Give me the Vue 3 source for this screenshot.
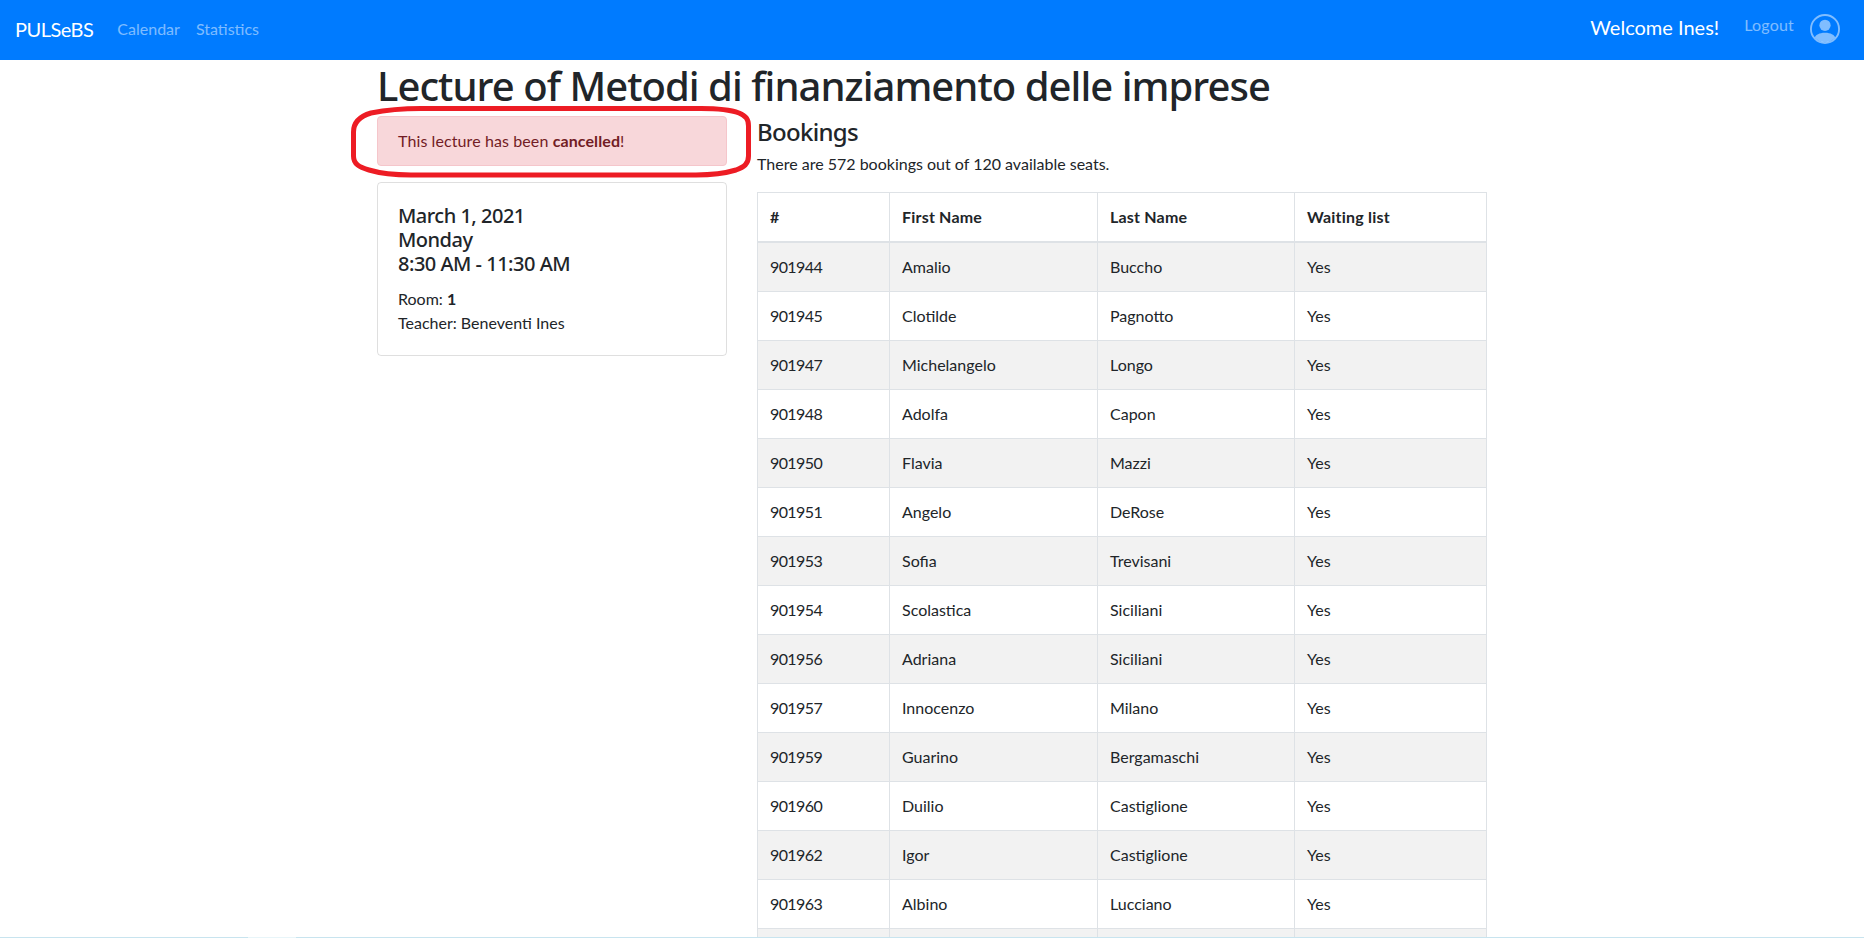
<script setup>
const students = [
  { id: 901944, first: 'Amalio', last: 'Buccho' },
  { id: 901945, first: 'Clotilde', last: 'Pagnotto' },
  { id: 901947, first: 'Michelangelo', last: 'Longo' },
  { id: 901948, first: 'Adolfa', last: 'Capon' },
  { id: 901950, first: 'Flavia', last: 'Mazzi' },
  { id: 901951, first: 'Angelo', last: 'DeRose' },
  { id: 901953, first: 'Sofia', last: 'Trevisani' },
  { id: 901954, first: 'Scolastica', last: 'Siciliani' },
  { id: 901956, first: 'Adriana', last: 'Siciliani' },
  { id: 901957, first: 'Innocenzo', last: 'Milano' },
  { id: 901959, first: 'Guarino', last: 'Bergamaschi' },
  { id: 901960, first: 'Duilio', last: 'Castiglione' },
  { id: 901962, first: 'Igor', last: 'Castiglione' },
  { id: 901963, first: 'Albino', last: 'Lucciano' }
]
</script>

<template>
  <div class="page">
    <nav class="navbar">
      <a class="brand">PULSeBS</a>
      <a class="nav-link">Calendar</a>
      <a class="nav-link">Statistics</a>
      <span class="welcome">Welcome Ines!</span>
      <a class="nav-link logout">Logout</a>
      <svg class="user" viewBox="0 0 16 16" fill="currentColor">
        <path d="M13.468 12.37C12.758 11.226 11.195 10 8 10s-4.757 1.225-5.468 2.37A6.987 6.987 0 0 0 8 15a6.987 6.987 0 0 0 5.468-2.63z"/>
        <path fill-rule="evenodd" d="M8 9a3 3 0 1 0 0-6 3 3 0 0 0 0 6z"/>
        <path fill-rule="evenodd" d="M8 1a7 7 0 1 0 0 14A7 7 0 0 0 8 1zM0 8a8 8 0 1 1 16 0A8 8 0 0 1 0 8z"/>
      </svg>
    </nav>

    <main class="container">
      <h1>Lecture of Metodi di finanziamento delle imprese</h1>
      <div class="row">
        <div class="side">
          <div class="alert">
            This lecture has been <b>cancelled</b>!
            <svg class="circled" viewBox="0 0 400 72" fill="none">
              <path d="M2.5 26 C2.5 16 10 10 20 7 C35 4 55 2.5 70 2.5 L350 2.5 C365 2.5 380 4 388 7 C395 10 397.5 13 397.5 20 L397.5 50 C397.5 58 393 61 385 64 C375 67 360 69 345 69 L60 69 C40 69 28 67 18 64 C8 61 2.5 58 2.5 50 Z" stroke="#ed1c24" stroke-width="5"/>
            </svg>
          </div>
          <div class="card">
            <h5>March 1, 2021<br>Monday<br>8:30 AM - 11:30 AM</h5>
            <p>Room: <b>1</b><br>Teacher: Beneventi Ines</p>
          </div>
        </div>
        <div class="content">
          <h4>Bookings</h4>
          <p class="summary">There are 572 bookings out of 120 available seats.</p>
          <table>
            <thead>
              <tr>
                <th class="c1">#</th>
                <th class="c2">First Name</th>
                <th class="c3">Last Name</th>
                <th class="c4">Waiting list</th>
              </tr>
            </thead>
            <tbody>
              <tr v-for="s in students" :key="s.id">
                <td class="num">{{ s.id }}</td>
                <td>{{ s.first }}</td>
                <td>{{ s.last }}</td>
                <td>Yes</td>
              </tr>
              <!-- the next row is only just visible at the bottom of the window -->
              <tr>
                <td>&nbsp;</td>
                <td></td>
                <td></td>
                <td></td>
              </tr>
            </tbody>
          </table>
        </div>
      </div>
    </main>
    <div class="bottom-line"></div>
  </div>
</template>

<style>
html, body {
  margin: 0;
  overflow: hidden;
}
</style>

<style scoped>
.page {
  position: relative;
  height: 100vh;
  overflow: hidden;
  font-family: "Lato", "Noto Sans", sans-serif;
  font-size: 16px;
  line-height: 1.5;
  color: #212529;
  background: #fff;
}

.navbar {
  display: flex;
  align-items: center;
  height: 60px;
  box-sizing: border-box;
  padding: 0 16px 2px 15px;
  background: #007bff;
}
.brand {
  font-size: 20px;
  letter-spacing: -0.5px;
  color: #fff;
  margin-right: 16px;
}
.nav-link {
  padding: 0 8px;
  color: rgba(255, 255, 255, 0.5);
}
.welcome {
  margin-left: auto;
  margin-bottom: 4px;
  font-size: 20px;
  color: #fff;
}
.logout {
  margin-left: 17px;
  margin-top: -8px;
  letter-spacing: 0.2px;
}
.user {
  width: 30px;
  height: 30px;
  margin-left: 8px;
  margin-right: 8px;
  color: rgba(255, 255, 255, 0.5);
}

.container {
  width: 1140px;
  margin: 0 auto;
  padding: 0 15px;
  box-sizing: border-box;
}
h1 {
  margin: 0 0 6px;
  padding-top: 2px;
  font-family: "Noto Sans", sans-serif;
  font-size: 40px;
  font-weight: 500;
  line-height: 48px;
  letter-spacing: -0.96px;
}
.row {
  display: flex;
  gap: 30px;
}
.side {
  flex: 0 0 350px;
}
.content {
  flex: 0 0 730px;
}

.alert {
  position: relative;
  padding: 12px 20px;
  margin-bottom: 16px;
  color: #721c24;
  background: #f8d7da;
  border: 1px solid #f5c6cb;
  border-radius: 4px;
  letter-spacing: 0.1px;
}
.circled {
  position: absolute;
  left: -27px;
  top: -11px;
  width: 400px;
  height: 72px;
}

.card {
  padding: 20px;
  border: 1px solid rgba(0, 0, 0, 0.125);
  border-radius: 4px;
}
h5 {
  margin: 0 0 11px;
  padding-top: 1px;
  font-family: "Noto Sans", sans-serif;
  font-size: 20px;
  font-weight: 500;
  line-height: 1.2;
  letter-spacing: -0.5px;
}
.card p {
  margin: 0;
}

h4 {
  margin: 0 0 6px;
  padding-top: 2px;
  font-family: "Noto Sans", sans-serif;
  font-size: 24px;
  font-weight: 500;
  line-height: 28px;
  letter-spacing: -0.7px;
}
.summary {
  margin: 0 0 16px;
}

table {
  width: 730px;
  table-layout: fixed;
  border-collapse: collapse;
}
th, td {
  box-sizing: border-box;
  padding: 12px;
  border: 1px solid #dee2e6;
  text-align: left;
  vertical-align: top;
}
th {
  font-weight: 700;
  letter-spacing: 0.2px;
  border-bottom-width: 2px;
}
.num {
  letter-spacing: -0.6px;
}
.c1 { width: 132px; }
.c2 { width: 208px; }
.c3 { width: 197px; }
tbody tr:nth-child(odd) {
  background: #f2f2f2;
}

.bottom-line {
  position: absolute;
  left: 0;
  right: 0;
  bottom: 0;
  height: 1px;
  background: linear-gradient(to right, #c8e4ef 248px, #e8f5f9 248px, #e8f5f9 296px, #c8e4ef 296px);
}
</style>
